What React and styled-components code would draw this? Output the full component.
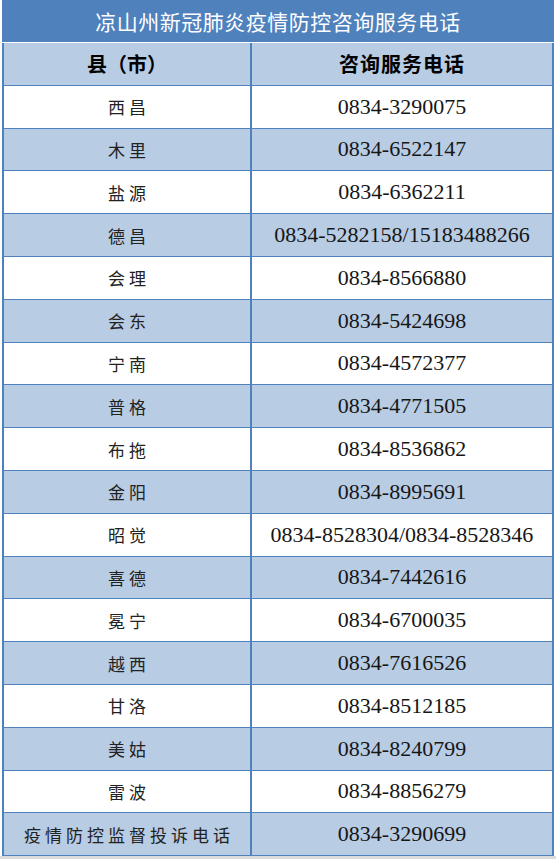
import React from 'react';
import styled, { createGlobalStyle } from 'styled-components';

const GlobalStyle = createGlobalStyle`
  html, body {
    margin: 0;
    padding: 0;
    background: #ffffff;
  }
`;

const Page = styled.div`
  width: 556px;
  padding: 0 2px 0 2px;
  box-sizing: border-box;
  font-family: "Liberation Serif", "Noto Sans CJK SC", serif;
`;

const Title = styled.div`
  height: 42px;
  background: #4f81bd;
  color: #ffffff;
  display: flex;
  align-items: center;
  justify-content: center;
  font-family: "Noto Sans CJK SC", sans-serif;
  font-size: 21px;
  letter-spacing: 0.5px;
  margin-bottom: 1px;
`;

const Table = styled.div`
  border-left: 2px solid #4f81bd;
  border-right: 2px solid #4f81bd;
`;

const Row = styled.div`
  display: grid;
  grid-template-columns: 246px 1fr;
  height: 42.8px;
  box-sizing: border-box;
  border-bottom: 1px solid #4f81bd;
  background: ${(p) => (p.$shaded ? '#b8cce4' : '#ffffff')};
`;

const Cell = styled.div`
  display: flex;
  align-items: center;
  justify-content: center;
  white-space: nowrap;
  & + & {
    border-left: 2px solid #4f81bd;
  }
`;

const HeadText = styled.span`
  font-family: "Noto Sans CJK SC", sans-serif;
  font-weight: 700;
  font-size: 20px;
  color: #000000;
  letter-spacing: ${(p) => (p.$spread ? '1px' : '0')};
`;

const Name = styled.span`
  font-family: "Noto Sans CJK SC", sans-serif;
  font-size: 17px;
  color: #222222;
  letter-spacing: 4px;
  margin-right: -4px;
`;

const Phone = styled.span`
  font-family: "Liberation Serif", serif;
  font-size: 22px;
  color: #161616;
`;

const BottomEdge = styled.div`
  height: 3px;
  background: #dcdcdc;
  margin: 0 -2px;
`;

const rows = [
  ['西昌', '0834-3290075'],
  ['木里', '0834-6522147'],
  ['盐源', '0834-6362211'],
  ['德昌', '0834-5282158/15183488266'],
  ['会理', '0834-8566880'],
  ['会东', '0834-5424698'],
  ['宁南', '0834-4572377'],
  ['普格', '0834-4771505'],
  ['布拖', '0834-8536862'],
  ['金阳', '0834-8995691'],
  ['昭觉', '0834-8528304/0834-8528346'],
  ['喜德', '0834-7442616'],
  ['冕宁', '0834-6700035'],
  ['越西', '0834-7616526'],
  ['甘洛', '0834-8512185'],
  ['美姑', '0834-8240799'],
  ['雷波', '0834-8856279'],
  ['疫情防控监督投诉电话', '0834-3290699'],
];

export default function App() {
  return (
    <Page>
      <GlobalStyle />
      <Title>凉山州新冠肺炎疫情防控咨询服务电话</Title>
      <Table>
        <Row $shaded>
          <Cell>
            <HeadText>县（市）</HeadText>
          </Cell>
          <Cell>
            <HeadText $spread>咨询服务电话</HeadText>
          </Cell>
        </Row>
        {rows.map(([name, phone], i) => (
          <Row key={name} $shaded={i % 2 === 1}>
            <Cell>
              <Name>{name}</Name>
            </Cell>
            <Cell>
              <Phone>{phone}</Phone>
            </Cell>
          </Row>
        ))}
      </Table>
      <BottomEdge />
    </Page>
  );
}
